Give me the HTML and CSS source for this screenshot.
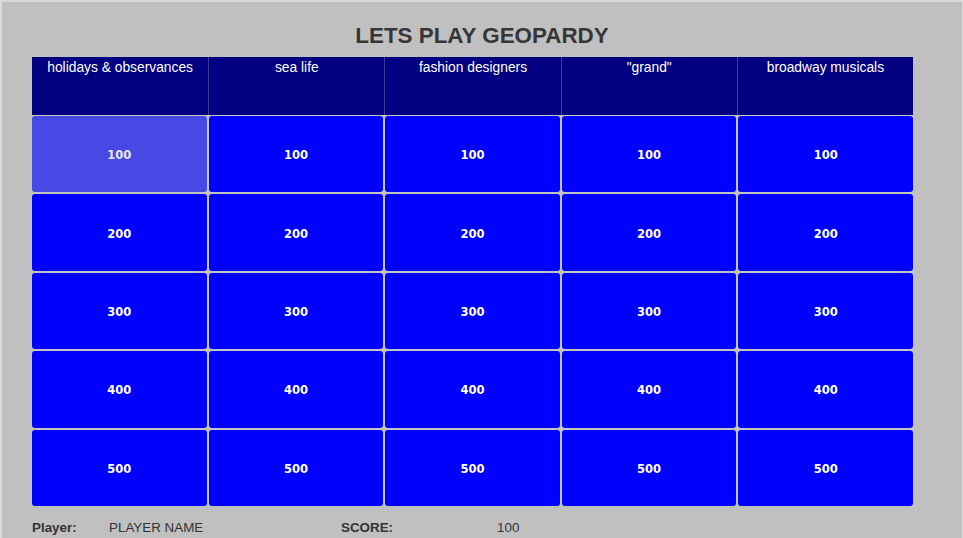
FILE: index.html
```html
<!DOCTYPE html>
<html>
<head>
<meta charset="utf-8">
<title>Geopardy</title>
<link rel="stylesheet" href="styles.css">
</head>
<body>
<div class="page">
  <h1 class="title">LETS PLAY GEOPARDY</h1>
  <div class="board">
    <div class="heads">
      <div class="head">holidays &amp; observances</div>
      <div class="head">sea life</div>
      <div class="head">fashion designers</div>
      <div class="head">"grand"</div>
      <div class="head">broadway musicals</div>
    </div>
    <div class="cells">
      <div class="cell hover">100</div><div class="cell">100</div><div class="cell">100</div><div class="cell">100</div><div class="cell">100</div>
      <div class="cell">200</div><div class="cell">200</div><div class="cell">200</div><div class="cell">200</div><div class="cell">200</div>
      <div class="cell">300</div><div class="cell">300</div><div class="cell">300</div><div class="cell">300</div><div class="cell">300</div>
      <div class="cell">400</div><div class="cell">400</div><div class="cell">400</div><div class="cell">400</div><div class="cell">400</div>
      <div class="cell">500</div><div class="cell">500</div><div class="cell">500</div><div class="cell">500</div><div class="cell">500</div>
    </div>
  </div>
  <div class="footer">
    <span class="label player-label">Player:</span>
    <span class="player-name">PLAYER NAME</span>
    <span class="label score-label">SCORE:</span>
    <span class="score">100</span>
  </div>
</div>
</body>
</html>
```
FILE: styles.css
```css
html, body {
  margin: 0;
  padding: 0;
  background: #c0c0c0;
}
body {
  font-family: "Liberation Sans", Arial, Helvetica, sans-serif;
  color: #333;
  overflow: hidden;
}
.page {
  box-sizing: border-box;
  width: 963px;
  min-height: 560px;
  border-top: 2px solid #dadada;
  border-left: 2px solid #dadada;
  border-right: 1px solid #dadada;
  padding: 21px 0 0 30px;
}
.title {
  margin: 0 0 9px -30px;
  font-size: 22.4px;
  line-height: 25px;
  font-weight: bold;
  text-align: center;
  color: #363636;
}
.board {
  width: 881px;
}
.heads {
  display: grid;
  grid-template-columns: repeat(5, 1fr);
  height: 58px;
  background: #000080;
}
.head {
  color: #fff;
  font-size: 13.8px;
  line-height: 16px;
  padding-top: 3px;
  text-align: center;
  border-left: 1px solid #3a3a98;
}
.head:first-child {
  border-left: none;
}
.cells {
  display: grid;
  grid-template-columns: repeat(5, 1fr);
  grid-auto-rows: 76.4px;
  gap: 2px;
  padding-top: 1px;
  background: #c4c4c4;
}
.cell {
  background: #0000ff;
  border-radius: 3px;
  color: #fff;
  font-family: "DejaVu Sans", Verdana, sans-serif;
  font-weight: bold;
  font-size: 11.5px;
  padding-top: 2px;
  display: flex;
  align-items: center;
  justify-content: center;
}
.cell.hover {
  background: #4848e4;
  color: #e8e8e8;
}
.footer {
  display: flex;
  margin-top: 14px;
  font-size: 13.4px;
  line-height: 16px;
  color: #333;
}
.label {
  font-weight: bold;
}
.player-label { width: 77px; }
.player-name { width: 232px; }
.score-label { width: 156px; }
```
